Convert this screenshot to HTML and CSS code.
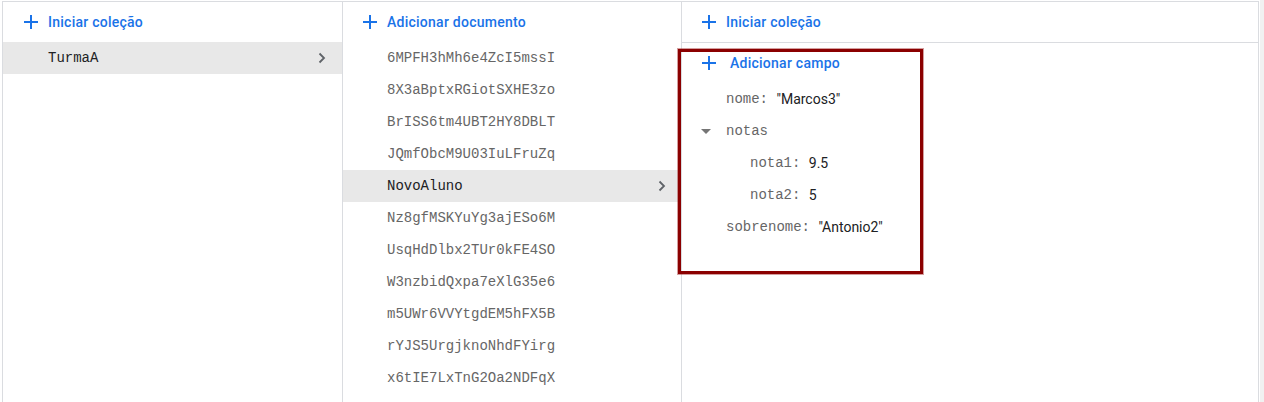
FILE: index.html
```html
<!DOCTYPE html>
<html lang="pt">
<head>
<meta charset="utf-8">
<title>Firestore</title>
<link rel="stylesheet" href="styles.css">
</head>
<body>
<div class="app">
  <div class="panel">
    <section class="col col-coll">
      <div class="col-head">
        <button class="add">
          <svg class="plus" width="14" height="14" viewBox="0 0 14 14"><path d="M7 0v14M0 7h14" stroke="#1a73e8" stroke-width="2"/></svg>
          <span>Iniciar coleção</span>
        </button>
      </div>
      <ul class="list">
        <li class="item selected"><span class="id">TurmaA</span>
          <svg class="chev" width="8" height="12" viewBox="0 0 8 12"><path d="M1.5 1.5L6 6l-4.5 4.5" fill="none" stroke="#5f6368" stroke-width="1.8"/></svg>
        </li>
      </ul>
    </section>
    <section class="col col-docs">
      <div class="col-head">
        <button class="add">
          <svg class="plus" width="14" height="14" viewBox="0 0 14 14"><path d="M7 0v14M0 7h14" stroke="#1a73e8" stroke-width="2"/></svg>
          <span>Adicionar documento</span>
        </button>
      </div>
      <ul class="list">
        <li class="item"><span class="id">6MPFH3hMh6e4ZcI5mssI</span></li>
        <li class="item"><span class="id">8X3aBptxRGiotSXHE3zo</span></li>
        <li class="item"><span class="id">BrISS6tm4UBT2HY8DBLT</span></li>
        <li class="item"><span class="id">JQmfObcM9U03IuLFruZq</span></li>
        <li class="item selected"><span class="id">NovoAluno</span>
          <svg class="chev" width="8" height="12" viewBox="0 0 8 12"><path d="M1.5 1.5L6 6l-4.5 4.5" fill="none" stroke="#5f6368" stroke-width="1.8"/></svg>
        </li>
        <li class="item"><span class="id">Nz8gfMSKYuYg3ajESo6M</span></li>
        <li class="item"><span class="id">UsqHdDlbx2TUr0kFE4SO</span></li>
        <li class="item"><span class="id">W3nzbidQxpa7eXlG35e6</span></li>
        <li class="item"><span class="id">m5UWr6VVYtgdEM5hFX5B</span></li>
        <li class="item"><span class="id">rYJS5UrgjknoNhdFYirg</span></li>
        <li class="item"><span class="id">x6tIE7LxTnG2Oa2NDFqX</span></li>
      </ul>
    </section>
    <section class="col col-fields">
      <div class="col-head bordered">
        <button class="add">
          <svg class="plus" width="14" height="14" viewBox="0 0 14 14"><path d="M7 0v14M0 7h14" stroke="#1a73e8" stroke-width="2"/></svg>
          <span>Iniciar coleção</span>
        </button>
      </div>
      <div class="field-add">
        <button class="add add-field">
          <svg class="plus" width="14" height="14" viewBox="0 0 14 14"><path d="M7 0v14M0 7h14" stroke="#1a73e8" stroke-width="2"/></svg>
          <span>Adicionar campo</span>
        </button>
      </div>
      <ul class="fields">
        <li class="field"><span class="key">nome: </span><span class="val">"Marcos3"</span></li>
        <li class="field map">
          <svg class="caret" width="10" height="5" viewBox="0 0 10 5"><path d="M0 0h10L5 5z" fill="#757575"/></svg>
          <span class="key">notas</span>
        </li>
        <li class="field nested"><span class="key">nota1: </span><span class="val">9.5</span></li>
        <li class="field nested"><span class="key">nota2: </span><span class="val">5</span></li>
        <li class="field"><span class="key">sobrenome: </span><span class="val">"Antonio2"</span></li>
      </ul>
    </section>
  </div>
  <div class="scroll"></div>
  <div class="highlight"></div>
</div>
</body>
</html>
```

FILE: styles.css
```css
* { box-sizing: border-box; }
html, body { margin: 0; padding: 0; background: #fff; }
body { font-family: Roboto, "Noto Sans", Arial, sans-serif; font-size: 14px; color: #202124; }

.app { display: flex; height: 402px; position: relative; overflow: hidden; }

.panel {
  display: flex;
  margin: 1px 0 0 2px;
  border-top: 1px solid #dadce0;
  border-left: 1px solid #dadce0;
  height: 401px;
}

.scroll { width: 4px; margin-left: 1px; background: #f1f1f1; }

.col { border-right: 1px solid #dadce0; height: 100%; }
.col-coll { width: 340px; }
.col-docs { width: 339px; }
.col-fields { width: 577px; }

.col-head { height: 40px; display: flex; align-items: center; }
.col-head.bordered { height: 41px; border-bottom: 1px solid #dadce0; }
.col-coll .col-head { padding-left: 21px; }
.col-docs .col-head, .col-fields .col-head { padding-left: 20px; }

.add {
  display: flex; align-items: center; gap: 10px;
  border: 0; background: none; padding: 0; cursor: pointer;
  font-family: Roboto, Arial, sans-serif; font-size: 14px; font-weight: 500;
  color: #1a73e8; letter-spacing: 0.25px;
}
.plus { display: block; flex: none; }

.list, .fields { list-style: none; margin: 0; padding: 0; }

.item {
  height: 32px; display: flex; align-items: center; justify-content: space-between;
  padding-right: 16px;
}
.col-coll .item { padding-left: 45px; }
.col-docs .item { padding-left: 44px; padding-right: 15px; }
.item.selected { background: #e8e8e8; }

.id, .key {
  font-family: "Liberation Mono", "DejaVu Sans Mono", monospace;
  font-size: 14px; color: #666; white-space: pre;
}
.item.selected .id { color: #202124; }
.chev { display: block; }

.field-add { height: 40px; display: flex; align-items: center; padding-left: 20px; }
.add-field { gap: 14px; }

.field { height: 32px; display: flex; align-items: center; padding-left: 44px; }
.field.nested { padding-left: 68px; }
.field.map { padding-left: 19px; }
.caret { display: block; margin-right: 15px; }
.val { color: #202124; font-size: 14px; }

.highlight {
  position: absolute; left: 678px; top: 49px; width: 245px; height: 225px;
  border: 3px solid #8b0000;
  box-shadow: 0 0 0 1px rgba(160, 40, 40, 0.45);
  pointer-events: none;
}
```
